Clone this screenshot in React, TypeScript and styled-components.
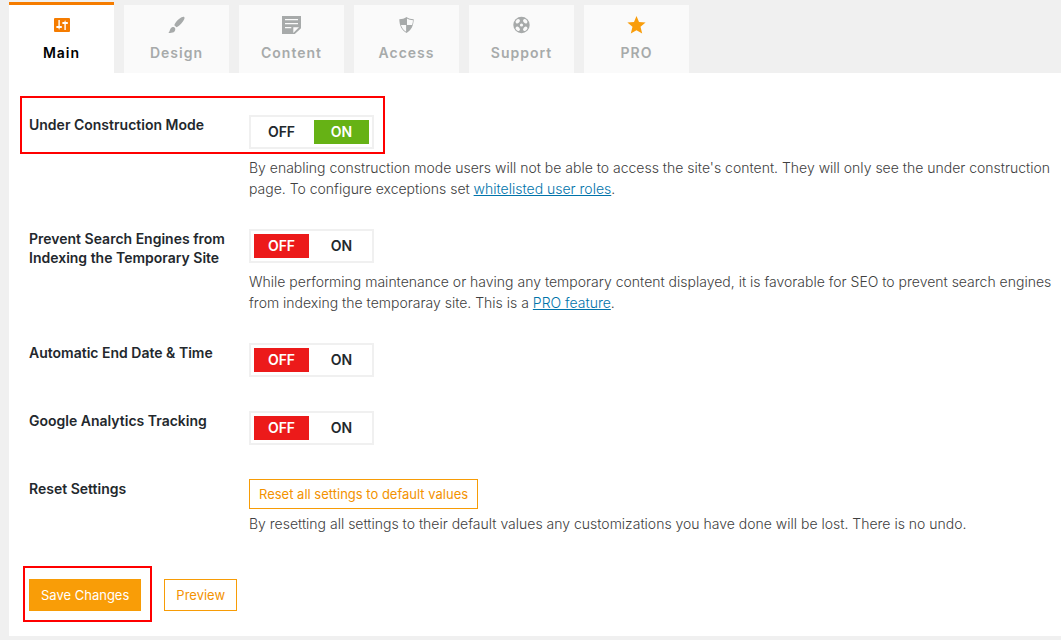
import React, { useState } from "react";
import styled, { createGlobalStyle, css } from "styled-components";

const GlobalStyle = createGlobalStyle`
  *, *::before, *::after { box-sizing: border-box; }
  body {
    margin: 0;
    background: #f0f0f0;
    color: #23282d;
    font-family: Inter, "Liberation Sans", sans-serif;
    font-size: 14px;
  }
`;

const Page = styled.main`
  padding: 2px 0 4px 9px;
`;

const TabBar = styled.nav`
  display: flex;
  align-items: flex-end;
  gap: 10px;
`;

const Tab = styled.a<{ $active?: boolean }>`
  display: flex;
  flex-direction: column;
  align-items: center;
  gap: 8px;
  width: 105px;
  padding: 10px 0;
  background: #fafafa;
  color: #a7aaaa;
  font-weight: 600;
  letter-spacing: 1px;
  line-height: 20px;
  text-decoration: none;
  ${(p) =>
    p.$active &&
    css`
      background: #fff;
      color: #000;
      border-top: 3px solid #f57c00;
    `}
`;

const TabIcon = styled.svg`
  display: block;
  width: 21px;
  height: 20px;
`;

const Panel = styled.form`
  padding: 27px 5px 25px 20px;
  background: #fff;
`;

const Row = styled.div`
  position: relative;
  display: grid;
  grid-template-columns: 200px 1fr;
  column-gap: 20px;
  padding: 15px 0;
`;

const Label = styled.div`
  font-weight: 600;
  line-height: 19px;
`;

const Field = styled.div`
  min-width: 0;
`;

const Toggle = styled.div`
  display: flex;
  gap: 5px;
  width: fit-content;
  margin-bottom: 4px;
  padding: 3px;
  border: 2px solid #f0f0f0;
`;

const Option = styled.label<{ $fill: string }>`
  width: 55px;
  font-weight: 600;
  line-height: 24px;
  text-align: center;
  cursor: pointer;
  &:has(input:checked) {
    background: ${(p) => p.$fill};
    color: #fff;
  }
`;

const Radio = styled.input`
  position: absolute;
  opacity: 0;
  pointer-events: none;
`;

const Description = styled.p`
  margin: 0;
  padding-top: 4px;
  color: #404040;
  font-weight: 300;
  line-height: 21px;
`;

const Link = styled.a`
  color: #0073aa;
`;

const Button = styled.button<{ $primary?: boolean; $compact?: boolean }>`
  display: block;
  height: ${(p) => (p.$compact ? 30 : 32)}px;
  padding: 0 ${(p) => (p.$compact ? 9 : 11)}px;
  border: 1px solid #f79c06;
  background: ${(p) => (p.$primary ? "#f99d07" : "#fff")};
  color: ${(p) => (p.$primary ? "#fff" : "#f39200")};
  font-family: inherit;
  font-size: 13px;
  font-weight: 400;
  white-space: nowrap;
  cursor: pointer;
`;

const Actions = styled.div`
  display: flex;
  gap: 23px;
  padding-top: 30px;
`;

const Marked = styled.div`
  position: relative;
`;

const RowMark = styled.span`
  position: absolute;
  top: -4px;
  left: -9px;
  width: 365px;
  height: 58px;
  border: 2px solid #ff0000;
  pointer-events: none;
`;

const ButtonMark = styled.span`
  position: absolute;
  inset: -13px -11px -11px -6px;
  border: 2px solid #ff0000;
  pointer-events: none;
`;

const icons: Record<string, React.ReactNode> = {
  Main: (
    <>
      <rect x="3" y="3" width="16" height="14" rx="1" fill="#f57c00" />
      <path d="M7.400 5h1.400v6h2v2h-2L8.100 15l-.7-2h-2v-2h2zM13.400 15h1.400V9h2V7h-2l-.7-2-.7 2h-2v2h2z" fill="#fff" />
    </>
  ),
  Design: (
    <path
      d="M18.200 2.100c.8.700.2 2.500-1.300 4.500-2 2.700-4.700 5.300-6.400 5.700L8.300 10.200c.4-1.900 2.500-4.400 5-6.400 2-1.600 4.100-2.400 4.900-1.700zM6.800 12.100c1-.7 2.700.4 2.500 2.100-.1 1.600-1.100 3-2.600 3.400-1.500.4-3.300.5-4.400.1 1.100-.6 1.200-1.500 1.700-2.900.5-1.400 1.500-2.400 2.800-2.700z"
      fill="currentColor"
    />
  ),
  Content: (
    <path
      fillRule="evenodd"
      d="M1 1h19v12.300L13.800 19H1zM4 4v1.200h13V4zM4 8v1.200h13V8zM4 12v1.200h6.300V12zM12.300 12.300V18l5.700-5.700z"
      fill="currentColor"
    />
  ),
  Access: (
    <>
      <path d="M10.500 2c2 1.500 4.500 2.200 7.200 2.300C17.500 10.500 15.500 15.300 10.500 18 5.500 15.300 3.500 10.500 3.300 4.300 6 4.200 8.500 3.500 10.500 2z" fill="currentColor" />
      <path d="M11 3.500V10h5.100c.5-1.500.8-3 .9-4.800-2.200-.1-4.200-.7-6-1.700zM10.100 10v6.700C7.700 15.200 5.800 13 4.900 10z" fill="#fafafa" />
    </>
  ),
  Support: (
    <>
      <circle cx="10.500" cy="10" r="8.200" fill="currentColor" />
      <g fill="#fafafa">
        {[45, 135, 225, 315].map((a) => (
          <ellipse key={a} transform={`rotate(${a} 10.500 10)`} cx="10.500" cy="4.700" rx="2.500" ry="1.800" />
        ))}
        <circle cx="10.500" cy="10" r="1.600" />
      </g>
    </>
  ),
  PRO: (
    <path d="M10.500 1l2.500 6.100 6.600.4-5.100 4.200 1.700 6.900-5.700-3.300-5.700 3.300 1.700-6.900L1.400 7.500 8 7.100z" fill="#f99d0b" />
  ),
};

const tabs = ["Main", "Design", "Content", "Access", "Support", "PRO"];

function Switch({ name, label, initial = "OFF" }: { name: string; label: string; initial?: string }) {
  const [value, setValue] = useState(initial);
  return (
    <Toggle role="radiogroup" aria-label={label}>
      {["OFF", "ON"].map((option) => (
        <Option key={option} $fill={option === "ON" ? "#66b215" : "#ec1a1a"}>
          <Radio type="radio" name={name} value={option} checked={value === option} onChange={() => setValue(option)} />
          {option}
        </Option>
      ))}
    </Toggle>
  );
}

export default function App() {
  return (
    <>
      <GlobalStyle />
      <Page>
        <TabBar>
          {tabs.map((name) => (
            <Tab key={name} href={`#${name.toLowerCase()}`} $active={name === "Main"}>
              <TabIcon viewBox="0 0 21 20" aria-hidden="true">
                {icons[name]}
              </TabIcon>
              {name}
            </Tab>
          ))}
        </TabBar>
        <Panel onSubmit={(e) => e.preventDefault()}>
          <Marked>
            <Row>
              <Label>Under Construction Mode</Label>
              <Field>
                <Switch name="status" label="Under Construction Mode" initial="ON" />
                <Description>
                  By enabling construction mode users will not be able to access the site's content. They will only see the under construction
                  page. To configure exceptions set <Link href="#access">whitelisted user roles</Link>.
                </Description>
              </Field>
            </Row>
            <RowMark />
          </Marked>
          <Row>
            <Label>Prevent Search Engines from Indexing the Temporary Site</Label>
            <Field>
              <Switch name="noindex" label="Prevent Search Engines from Indexing the Temporary Site" />
              <Description>
                While performing maintenance or having any temporary content displayed, it is favorable for SEO to prevent search engines
                from indexing the temporaray site. This is a <Link href="#pro">PRO feature</Link>.
              </Description>
            </Field>
          </Row>
          <Row>
            <Label>Automatic End Date &amp; Time</Label>
            <Field>
              <Switch name="end-date" label="Automatic End Date & Time" />
            </Field>
          </Row>
          <Row>
            <Label>Google Analytics Tracking</Label>
            <Field>
              <Switch name="analytics" label="Google Analytics Tracking" />
            </Field>
          </Row>
          <Row>
            <Label>Reset Settings</Label>
            <Field>
              <Button type="button" $compact>
                Reset all settings to default values
              </Button>
              <Description>
                By resetting all settings to their default values any customizations you have done will be lost. There is no undo.
              </Description>
            </Field>
          </Row>
          <Actions>
            <Marked>
              <Button type="submit" $primary>
                Save Changes
              </Button>
              <ButtonMark />
            </Marked>
            <Button type="button">Preview</Button>
          </Actions>
        </Panel>
      </Page>
    </>
  );
}
